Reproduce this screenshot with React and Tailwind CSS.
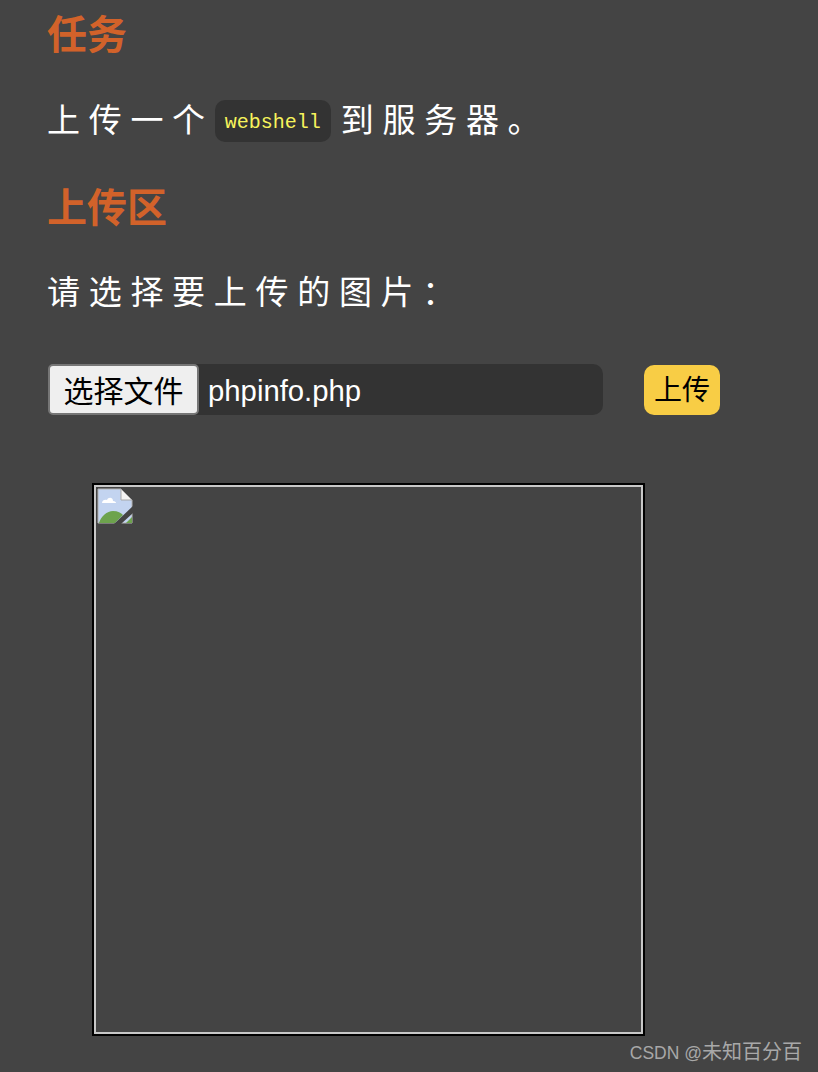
const sans = { fontFamily: '"Liberation Sans", "Noto Sans CJK SC", sans-serif' };

const BrokenImage = () => (
  <svg width="36" height="36" viewBox="0 0 36 36" className="block">
    <path d="M1 1H24L35 12V35H1Z" fill="#c3d4f0" stroke="#b4b4b4" strokeWidth="1" />
    <path d="M24 1L35 12H24Z" fill="#f4f4f4" stroke="#a8a8a8" strokeWidth="1" />
    <path d="M5 15c0-3 3-4 5-3 1-3 6-3 6 1 2 0 3 1 3 2z" fill="#ffffff" />
    <path d="M2 35c2-7 8-12 14-12 5 0 8 2 10 4l-8 8z" fill="#6da34d" />
    <path d="M29 35l6-6v6z" fill="#6da34d" />
    <path d="M17 36L36 18V25L24 36Z" fill="#444444" />
  </svg>
);

export default function App() {
  return (
    <div className="relative h-[1072px] w-[818px] overflow-hidden bg-[#444444] pl-12" style={sans}>
      <h2 className="-ml-px pt-[11px] text-[40px] leading-[48px] font-bold text-[#d2622a]">任务</h2>

      <p className="mt-[41px] -ml-px flex h-[42px] items-center text-[33px] tracking-[8.700px] text-white">
        <span>上传一个</span>
        <code className="mr-[10px] ml-px flex h-[42px] w-[116px] items-center justify-center rounded-[10px] bg-[#333333] pt-[3px] font-['Liberation_Mono',monospace] text-[20px] tracking-normal text-[#f7f35c]">
          webshell
        </code>
        <span>到服务器。</span>
      </p>

      <h2 className="mt-[42px] -ml-px text-[40px] leading-[48px] font-bold text-[#d2622a]">上传区</h2>

      <p className="mt-[40px] -ml-px h-[42px] text-[33px] leading-[42px] tracking-[8.700px] text-white">请选择要上传的图片：</p>

      <div className="mt-[50px] flex items-center">
        <div className="flex h-[51px] w-[555px] items-center rounded-[10px] bg-[#333333] text-[29.300px] text-white">
          <button className="h-[51px] w-[151px] rounded-[5px] border-2 border-[#767676] bg-[#efefef] pt-[3px] text-[30px] text-black">选择文件</button>
          <span className="ml-[9px] pt-[3px]">phpinfo.php</span>
        </div>
        <button className="ml-[41px] h-[50px] w-[76px] rounded-[10px] bg-[#f8cd45] pt-[2px] text-[28px] text-black">上传</button>
      </div>

      <div className="mt-[68px] ml-[44px] h-[553px] w-[553px] border-2 border-black">
        <div className="h-full w-full border-2 border-[#c8c8c8] pt-px pl-px">
          <BrokenImage />
        </div>
      </div>

      <div className="absolute right-[16px] bottom-[5px] flex items-baseline text-[#a8a8a8]">
        <span className="text-[17.500px]">CSDN @</span>
        <span className="text-[20px]">未知百分百</span>
      </div>
    </div>
  );
}
